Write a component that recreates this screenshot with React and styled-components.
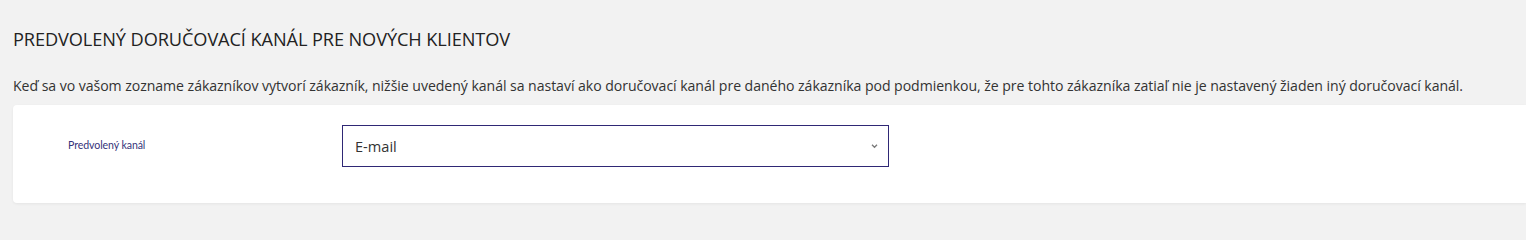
import React from 'react';
import styled, { createGlobalStyle } from 'styled-components';

const GlobalStyle = createGlobalStyle`
  html, body {
    margin: 0;
    padding: 0;
    background: #f2f2f2;
    font-family: "Open Sans", "Noto Sans", sans-serif;
    overflow: hidden;
  }
`;

const Page = styled.div`
  width: 1526px;
  height: 212px;
  padding: 26px 0 0 13px;
  box-sizing: border-box;
`;

const Title = styled.h2`
  margin: 0;
  font-size: 18.2px;
  font-weight: 400;
  color: #222;
  line-height: 26px;
  letter-spacing: -0.1px;
`;

const Intro = styled.p`
  margin: 24px 0 0;
  font-size: 14.1px;
  color: #333;
  line-height: 20px;
  letter-spacing: -0.05px;
  white-space: nowrap;
`;

const Card = styled.div`
  margin-top: 9px;
  background: #fff;
  border-radius: 4px 0 0 4px;
  box-shadow: 0 1px 3px rgba(0, 0, 0, 0.06);
  height: 98px;
  display: flex;
  align-items: flex-start;
  padding-top: 20px;
  box-sizing: border-box;
`;

const Label = styled.label`
  width: 329px;
  padding: 12px 0 0 55px;
  box-sizing: border-box;
  font-family: "Lato", "Open Sans", sans-serif;
  font-size: 10.6px;
  line-height: 16px;
  letter-spacing: -0.1px;
  color: #35337a;
`;

const SelectBox = styled.div`
  width: 547px;
  height: 42px;
  border: 1px solid #2f2875;
  box-sizing: border-box;
  display: flex;
  align-items: center;
  justify-content: space-between;
  padding: 0 10px 0 12px;
  font-size: 14.6px;
  color: #333;
`;

const Chevron = () => (
  <svg width="7" height="6" viewBox="0 0 7 6">
    <path d="M1 1.8 L3.5 4.3 L6 1.8" fill="none" stroke="#7a7a7a" strokeWidth="1.3" />
  </svg>
);

export default function App() {
  return (
    <>
      <GlobalStyle />
      <Page>
        <Title>PREDVOLENÝ DORUČOVACÍ KANÁL PRE NOVÝCH KLIENTOV</Title>
        <Intro>
          Keď sa vo vašom zozname zákazníkov vytvorí zákazník, nižšie uvedený kanál sa nastaví ako doručovací kanál pre daného zákazníka pod podmienkou, že pre tohto zákazníka zatiaľ nie je nastavený žiaden iný doručovací kanál.
        </Intro>
        <Card>
          <Label>Predvolený kanál</Label>
          <SelectBox>
            <span>E-mail</span>
            <Chevron />
          </SelectBox>
        </Card>
      </Page>
    </>
  );
}
